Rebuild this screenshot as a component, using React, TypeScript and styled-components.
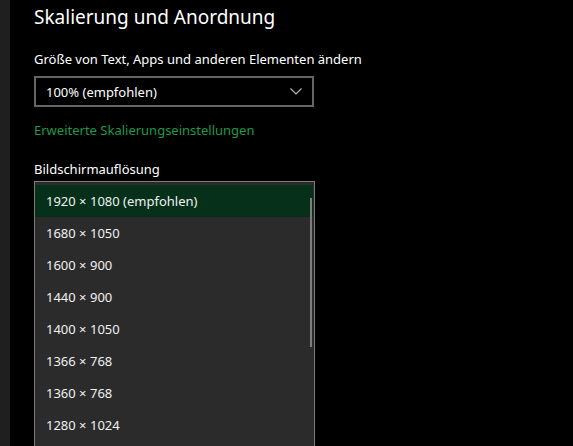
import React from "react";
import styled, { createGlobalStyle } from "styled-components";

const Global = createGlobalStyle`
  html, body { margin: 0; padding: 0; background: #000; }
  body { font-family: "Noto Sans", "Open Sans", sans-serif; color: #fff; overflow: hidden; }
`;

const Page = styled.div`
  display: flex;
  width: 573px;
  height: 446px;
  background: #000;
  overflow: hidden;
`;

const Rail = styled.div`
  width: 10px;
  flex: none;
  background: #1f1f1f;
`;

const Content = styled.main`
  flex: 1;
  padding: 2px 0 0 24px;
  display: flex;
  flex-direction: column;
`;

const Title = styled.h1`
  margin: 0;
  font-size: 19px;
  font-weight: 400;
  line-height: 30px;
  color: #fff;
`;

const Label = styled.div<{ $top: number }>`
  margin-top: ${(p) => p.$top}px;
  font-size: 13px;
  line-height: 20px;
  color: #fff;
`;

const Combo = styled.div`
  margin-top: 7px;
  width: 280px;
  height: 31px;
  box-sizing: border-box;
  border: 2px solid #666;
  display: flex;
  align-items: center;
  justify-content: space-between;
  padding: 0 10px 0 10px;
  font-size: 13px;
  color: #fff;
`;

const Link = styled.div`
  margin-top: 13px;
  font-size: 13px;
  line-height: 20px;
  color: #1f9a48;
`;

const List = styled.div`
  margin-top: 2px;
  width: 281px;
  box-sizing: border-box;
  border: 1px solid #7a7a7a;
  border-bottom: none;
  background: #2b2b2b;
  padding-top: 3px;
  position: relative;
  flex: 1;
`;

const Item = styled.div<{ $selected?: boolean }>`
  height: 32px;
  display: flex;
  align-items: center;
  padding-left: 11px;
  margin-right: 1px;
  font-size: 13px;
  color: #f0f0f0;
  background: ${(p) => (p.$selected ? "#063019" : "transparent")};
`;

const Scrollbar = styled.div`
  position: absolute;
  right: 2px;
  top: 16px;
  width: 2px;
  height: 149px;
  background: #7d7d7d;
`;

const items = [
  "1920 × 1080 (empfohlen)",
  "1680 × 1050",
  "1600 × 900",
  "1440 × 900",
  "1400 × 1050",
  "1366 × 768",
  "1360 × 768",
  "1280 × 1024",
];

export default function App() {
  return (
    <>
      <Global />
      <Page>
        <Rail />
        <Content>
          <Title>Skalierung und Anordnung</Title>
          <Label $top={17}>Größe von Text, Apps und anderen Elementen ändern</Label>
          <Combo>
            <span>100% (empfohlen)</span>
            <svg width="12" height="7" viewBox="0 0 12 7" fill="none">
              <path d="M0.5 0.5 L6 6 L11.5 0.5" stroke="#bbb" strokeWidth="1.1" />
            </svg>
          </Combo>
          <Link>Erweiterte Skalierungseinstellungen</Link>
          <Label $top={19}>Bildschirmauflösung</Label>
          <List>
            {items.map((t, i) => (
              <Item key={t} $selected={i === 0}>
                {t}
              </Item>
            ))}
            <Scrollbar />
          </List>
        </Content>
      </Page>
    </>
  );
}
